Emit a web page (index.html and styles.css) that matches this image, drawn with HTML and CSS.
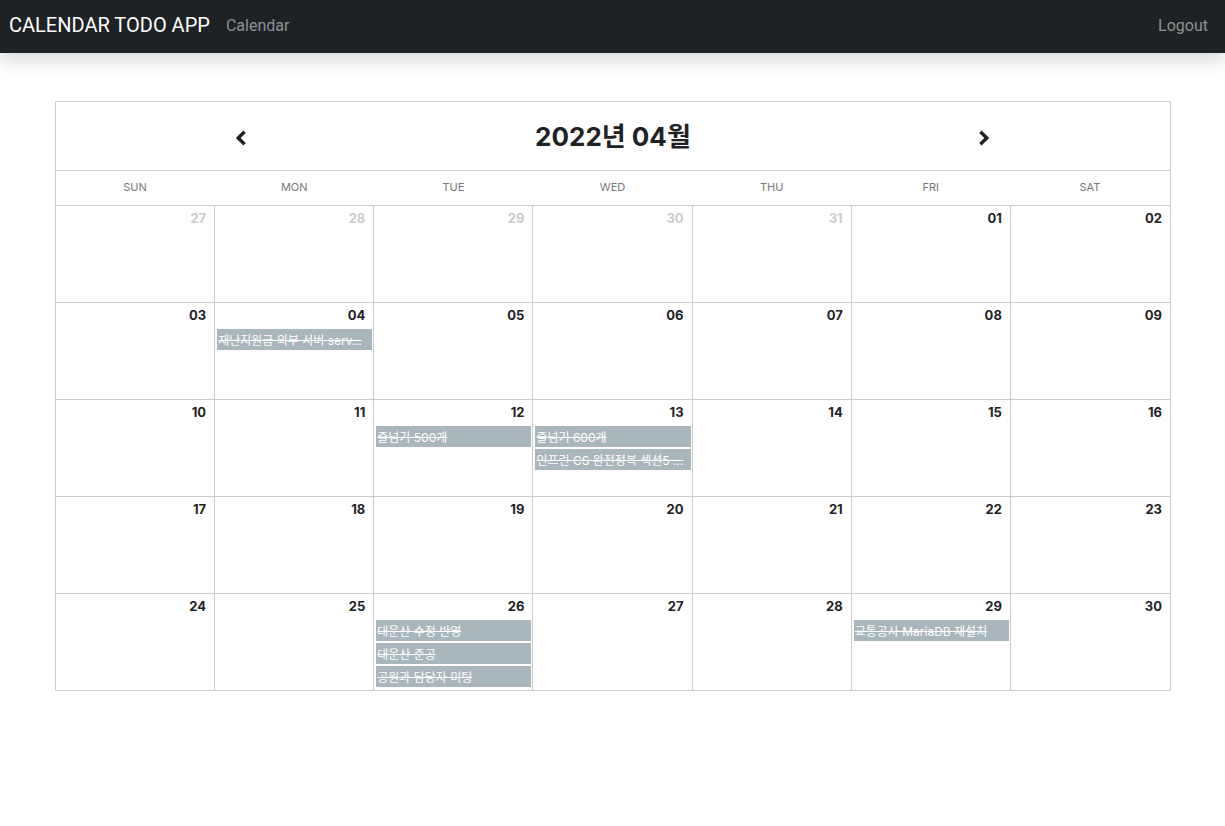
FILE: index.html
```html
<!DOCTYPE html>
<html lang="ko">
<head>
  <meta charset="utf-8">
  <meta name="viewport" content="width=device-width, initial-scale=1">
  <title>Calendar Todo App</title>
  <link rel="stylesheet" href="styles.css">
</head>
<body>
  <nav class="navbar">
    <a class="brand" href="#">CALENDAR TODO APP</a>
    <a class="nav-link" href="#">Calendar</a>
    <a class="nav-link logout" href="#">Logout</a>
  </nav>
  <main class="page">
    <section class="calendar">
      <header class="calendar-header">
        <button class="arrow" type="button" aria-label="Previous month">
          <svg width="10" height="16" viewBox="0 0 10 16"><path d="M8.6 1.7 2.2 8l6.4 6.3" fill="none" stroke="currentColor" stroke-width="3.3"/></svg>
        </button>
        <h1 class="month">2022년 04월</h1>
        <button class="arrow" type="button" aria-label="Next month">
          <svg width="10" height="16" viewBox="0 0 10 16"><path d="M1.4 1.7 7.8 8l-6.4 6.3" fill="none" stroke="currentColor" stroke-width="3.3"/></svg>
        </button>
      </header>
      <table class="grid">
        <thead>
          <tr><th>SUN</th><th>MON</th><th>TUE</th><th>WED</th><th>THU</th><th>FRI</th><th>SAT</th></tr>
        </thead>
        <tbody>
          <tr>
            <td class="muted"><div class="date">27</div></td>
            <td class="muted"><div class="date">28</div></td>
            <td class="muted"><div class="date">29</div></td>
            <td class="muted"><div class="date">30</div></td>
            <td class="muted"><div class="date">31</div></td>
            <td><div class="date">01</div></td>
            <td><div class="date">02</div></td>
          </tr>
          <tr>
            <td><div class="date">03</div></td>
            <td><div class="date">04</div><div class="event">재난지원금 외부 서버 serv…</div></td>
            <td><div class="date">05</div></td>
            <td><div class="date">06</div></td>
            <td><div class="date">07</div></td>
            <td><div class="date">08</div></td>
            <td><div class="date">09</div></td>
          </tr>
          <tr>
            <td><div class="date">10</div></td>
            <td><div class="date">11</div></td>
            <td><div class="date">12</div><div class="event">줄넘기 500개</div></td>
            <td><div class="date">13</div><div class="event">줄넘기 600개</div><div class="event">인프런 CS 완전정복 섹션5 …</div></td>
            <td><div class="date">14</div></td>
            <td><div class="date">15</div></td>
            <td><div class="date">16</div></td>
          </tr>
          <tr>
            <td><div class="date">17</div></td>
            <td><div class="date">18</div></td>
            <td><div class="date">19</div></td>
            <td><div class="date">20</div></td>
            <td><div class="date">21</div></td>
            <td><div class="date">22</div></td>
            <td><div class="date">23</div></td>
          </tr>
          <tr>
            <td><div class="date">24</div></td>
            <td><div class="date">25</div></td>
            <td><div class="date">26</div><div class="event">대운산 수정 반영</div><div class="event">대운산 준공</div><div class="event">공원과 담당자 미팅</div></td>
            <td><div class="date">27</div></td>
            <td><div class="date">28</div></td>
            <td><div class="date">29</div><div class="event">교통공사 MariaDB 재설치</div></td>
            <td><div class="date">30</div></td>
          </tr>
        </tbody>
      </table>
    </section>
  </main>
</body>
</html>
```
FILE: styles.css
```css
* { box-sizing: border-box; }

body {
  margin: 0;
  background: #fff;
  color: #1e2225;
  font-family: Inter, "Noto Sans CJK KR", sans-serif;
}

.navbar {
  display: flex;
  align-items: center;
  gap: 16px;
  padding: 10px 17px 12px 9px;
  background: #1e2225;
  box-shadow: 0 8px 16px rgba(0, 0, 0, .15);
}

.navbar a {
  font-family: Roboto, sans-serif;
  text-decoration: none;
}

.brand {
  color: #fff;
  font-size: 20px;
  line-height: 31px;
}

.nav-link {
  color: #8e9192;
  font-size: 16px;
  line-height: 24px;
}

.logout { margin-left: auto; }

.page { padding: 48px 54px 48px 55px; }

.calendar { border: 1px solid #ccc; }

.calendar-header {
  display: grid;
  grid-template-columns: repeat(3, 1fr);
  align-items: center;
  justify-items: center;
  height: 68px;
}

.month {
  margin: 0;
  padding-top: 2px;
  font-size: 26px;
  font-weight: 700;
  line-height: 32px;
  white-space: nowrap;
}

.arrow {
  display: flex;
  margin: 0;
  padding: 4px 9px 0 8px;
  border: 0;
  background: none;
  color: inherit;
}

.grid {
  width: 100%;
  border-spacing: 0;
  table-layout: fixed;
}

.grid th {
  height: 35px;
  padding: 0 1px 2px 0;
  border-top: 1px solid #ccc;
  color: #777;
  font-size: 11px;
  font-weight: 400;
}

.grid td {
  height: 97px;
  padding: 0;
  border-top: 1px solid #ccc;
  border-right: 1px solid #ccc;
  vertical-align: top;
}

.grid td:last-child { border-right: 0; }

.date {
  padding: 0 8px 2px;
  font-size: 13px;
  font-weight: 700;
  line-height: 24px;
  text-align: right;
}

.muted { color: #ccc; }

.event {
  height: 21px;
  margin: 0 1px 2px 2px;
  padding: 0 1px;
  overflow: hidden;
  background: #a9b6bc;
  color: #fff;
  font-size: 12px;
  line-height: 23px;
  text-decoration: line-through;
  text-overflow: ellipsis;
  white-space: nowrap;
}
```
